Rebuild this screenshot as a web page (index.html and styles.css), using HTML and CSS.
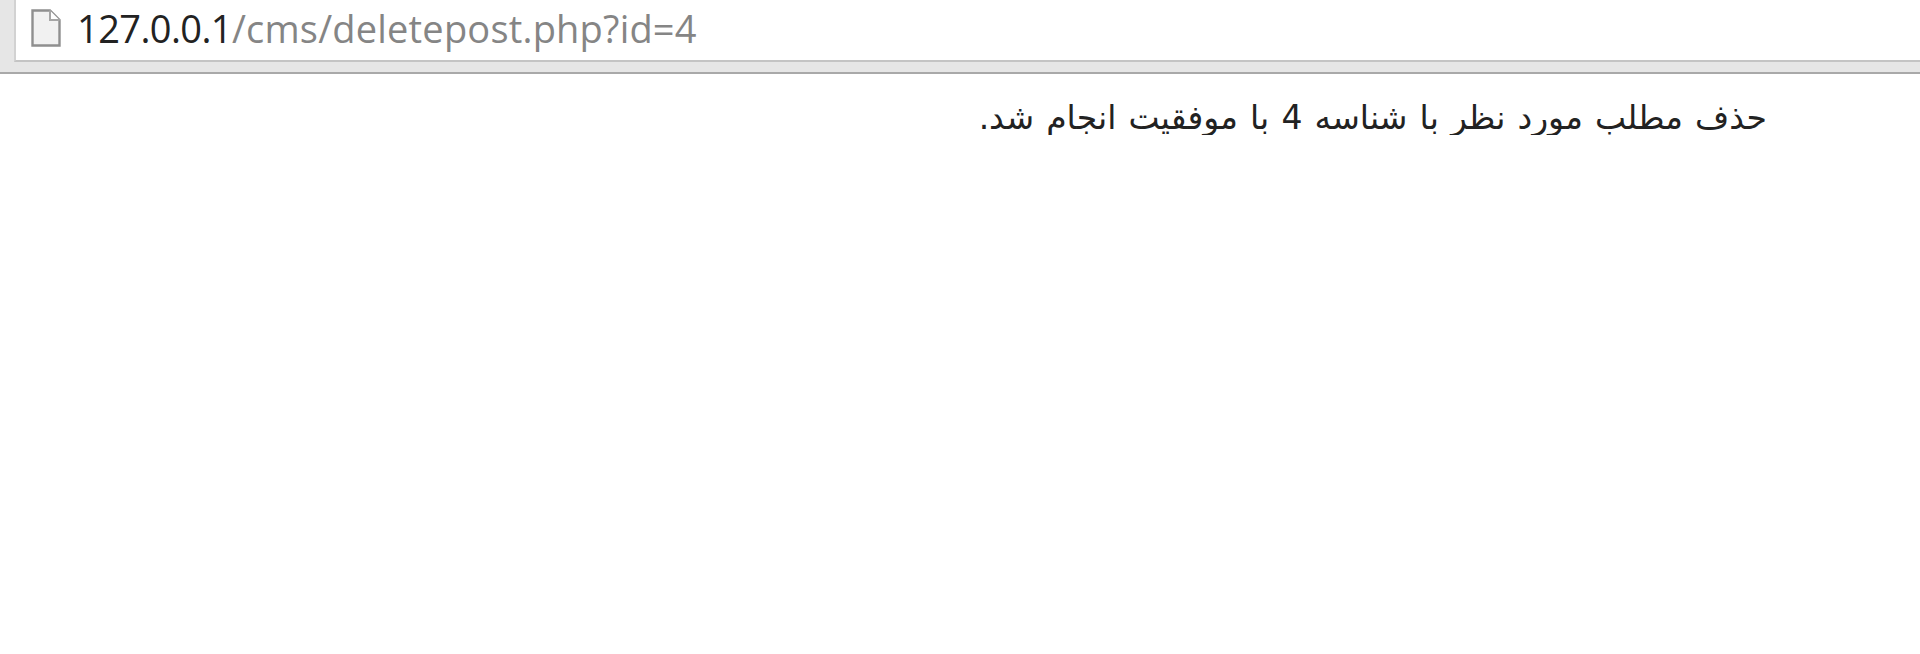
FILE: index.html
```html
<!DOCTYPE html>
<html lang="fa">
  <head>
    <meta charset="UTF-8" />
    <meta name="viewport" content="width=device-width, initial-scale=1.0" />
    <title>Document</title>
    <link rel="stylesheet" href="styles.css">
  </head>
  <body>
    <header class="toolbar">
      <div class="address-bar" dir="ltr">
        <svg class="page-icon" width="30" height="38" viewBox="0 0 30 38">
          <path d="M1.5 1.5H19L28.5 11V36.5H1.5Z" fill="#f1f1f1" stroke="#8f8f8f" stroke-width="2.4" />
          <path d="M19 1.5V11H28.5" fill="#fff" stroke="#a5a5a5" stroke-width="2" />
        </svg>
        <span class="url"><span class="host">127.0.0.1</span>/cms/deletepost.php?id=4</span>
      </div>
    </header>
    <p class="message" dir="rtl">حذف مطلب مورد نظر با شناسه 4 با موفقیت انجام شد.</p>
  </body>
</html>
```

FILE: styles.css
```css
body {
  margin: 0;
  background-color: #fff;
  font-family: "DejaVu Sans", sans-serif;
  color: #222;
}

.toolbar {
  height: 74px;
  box-sizing: border-box;
  padding-left: 14px;
  background-color: #e6e6e6;
  border-bottom: 2px solid #a9a9a9;
}

.address-bar {
  height: 62px;
  box-sizing: border-box;
  display: flex;
  align-items: center;
  gap: 16px;
  padding-left: 15px;
  padding-bottom: 4px;
  background-color: #fff;
  border-left: 2px solid #d2d2d2;
  border-bottom: 2px solid #c4c4c4;
}

.url {
  font-family: "Open Sans", sans-serif;
  font-size: 38px;
  letter-spacing: 0.2px;
  color: #858585;
}

.host {
  letter-spacing: -0.6px;
  color: #222;
}

.message {
  margin: 27px 153px 0 0;
  font-size: 33px;
  line-height: 34px;
  word-spacing: 1.6px;
}
```
